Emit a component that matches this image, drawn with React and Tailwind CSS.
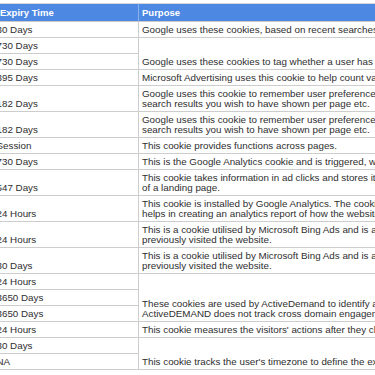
const rows = [
  { expiry: '30 Days', purpose: ['Google uses these cookies, based on recent searches and interactions'] },
  { expiry: '730 Days', purpose: ['Google uses these cookies to tag whether a user has visited'], span: 2 },
  { expiry: '730 Days', skip: true },
  { expiry: '395 Days', purpose: ['Microsoft Advertising uses this cookie to help count valid'] },
  {
    expiry: '182 Days',
    purpose: ['Google uses this cookie to remember user preferences for the', 'search results you wish to have shown per page etc.'],
  },
  {
    expiry: '182 Days',
    purpose: ['Google uses this cookie to remember user preferences for the', 'search results you wish to have shown per page etc.'],
  },
  { expiry: 'Session', purpose: ['This cookie provides functions across pages.'] },
  { expiry: '730 Days', purpose: ['This is the Google Analytics cookie and is triggered, when'] },
  { expiry: '547 Days', purpose: ['This cookie takes information in ad clicks and stores it in a', 'of a landing page.'] },
  {
    expiry: '24 Hours',
    purpose: ['This cookie is installed by Google Analytics. The cookie is used', 'helps in creating an analytics report of how the website is doing.'],
  },
  { expiry: '24 Hours', purpose: ['This is a cookie utilised by Microsoft Bing Ads and is a', 'previously visited the website.'] },
  { expiry: '30 Days', purpose: ['This is a cookie utilised by Microsoft Bing Ads and is a', 'previously visited the website.'] },
  {
    expiry: '24 Hours',
    purpose: ['These cookies are used by ActiveDemand to identify a', 'ActiveDEMAND does not track cross domain engagement.'],
    span: 3,
  },
  { expiry: '3650 Days', skip: true },
  { expiry: '3650 Days', skip: true },
  { expiry: '24 Hours', purpose: ['This cookie measures the visitors\' actions after they click'] },
  { expiry: '30 Days', purpose: ['This cookie tracks the user\'s timezone to define the exact'], span: 2 },
  { expiry: 'NA', skip: true },
];

export default function App() {
  return (
    <div
      className="w-[375px] h-[375px] overflow-hidden bg-white pt-[3px] text-[9.8px] text-[#2e2e2e]"
      style={{ fontFamily: '"Liberation Sans", Arial, sans-serif' }}
    >
      <table className="table-fixed border-separate border-spacing-0 ml-[-4px] w-[760px]">
        <colgroup>
          <col className="w-[142px]" />
          <col />
        </colgroup>
        <thead>
          <tr>
            <th className="bg-[#4d88e2] text-white text-[9.5px] font-bold text-left leading-[12px] pt-[3px] pb-[2px] pl-[4px] border-t border-b border-t-[#d6d6d6] border-b-[#c9c9c9] align-bottom whitespace-nowrap">
              Expiry Time
            </th>
            <th className="bg-[#4d88e2] text-white text-[9.5px] font-bold text-left leading-[12px] pt-[3px] pb-[2px] pl-[3px] border-t border-b border-l border-t-[#d6d6d6] border-b-[#c9c9c9] border-l-[#8db1ee] align-bottom whitespace-nowrap">
              Purpose
            </th>
          </tr>
        </thead>
        <tbody>
          {rows.map((row, i) => (
            <tr key={i}>
              <td className="leading-[10px] pt-[3px] pb-[2px] pl-[0.5px] border-b border-[#cdcdcd] align-bottom whitespace-nowrap">
                {row.expiry}
              </td>
              {!row.skip && (
                <td
                  rowSpan={row.span || 1}
                  className="leading-[10px] pt-[3px] pb-[2px] pl-[3px] border-b border-l border-[#cdcdcd] align-bottom whitespace-nowrap"
                >
                  {row.purpose.map((line, j) => (
                    <div key={j}>{line}</div>
                  ))}
                </td>
              )}
            </tr>
          ))}
        </tbody>
      </table>
    </div>
  );
}
